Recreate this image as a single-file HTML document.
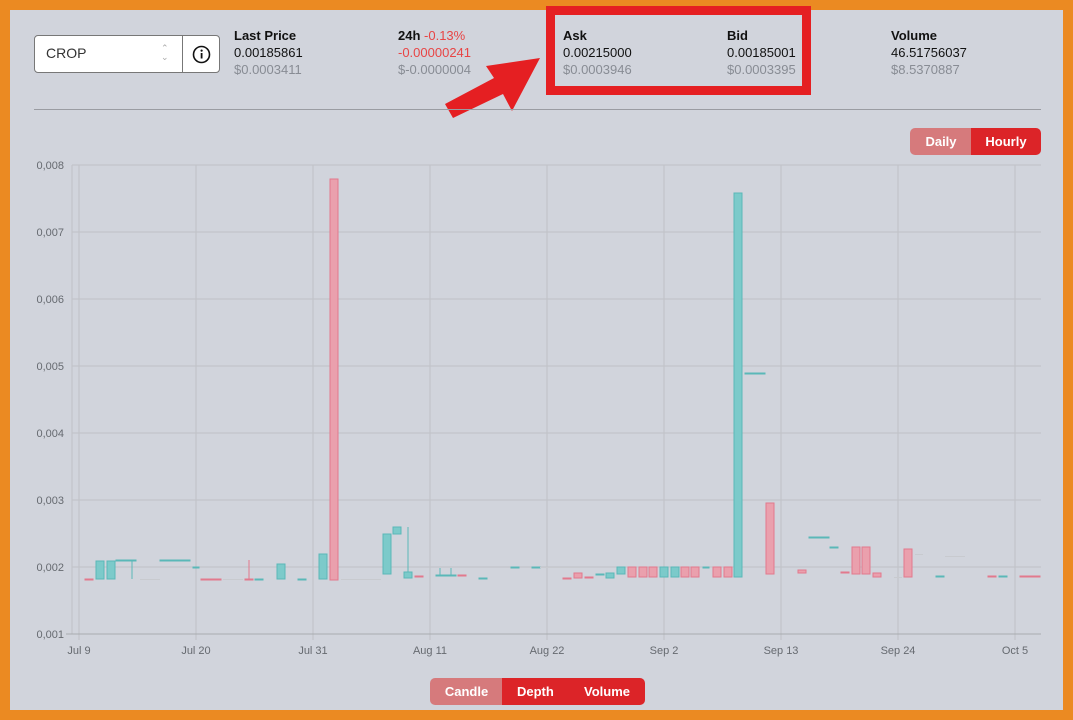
<!DOCTYPE html>
<html><head><meta charset="utf-8"><style>
*{margin:0;padding:0;box-sizing:border-box}
body{width:1073px;height:720px;background:#eb8a22;position:relative;overflow:hidden;font-family:"Liberation Sans",sans-serif}
#in{position:absolute;left:10px;top:10px;width:1053px;height:700px;background:#d1d4dc}
.t{position:absolute;font-size:13px;line-height:17px;color:#111}
.t b{font-weight:bold}
.g{color:#888c94}
.r{color:#e84545}
.sel{position:absolute;left:34px;top:35px;width:186px;height:38px;border:1px solid #777;border-radius:4px;background:#fff}
.btn{position:absolute;height:27px;font-size:13px;font-weight:bold;color:#fff;text-align:center;line-height:27px}
</style></head><body>
<div id="in"></div>
<div class="sel">
 <div style="position:absolute;left:11px;top:9px;font-size:14px;color:#333">CROP</div>
 <div style="position:absolute;left:126px;top:8px;font-size:9px;color:#aaa;line-height:9px">&#8963;<br>&#8964;</div>
 <div style="position:absolute;left:147px;top:0;width:1px;height:36px;background:#777"></div>
 <svg style="position:absolute;left:157px;top:9px" width="19" height="19"><circle cx="9.5" cy="9.5" r="8" fill="none" stroke="#111" stroke-width="1.6"/><rect x="8.7" y="8" width="1.8" height="5.5" fill="#111"/><circle cx="9.6" cy="5.6" r="1.1" fill="#111"/></svg>
</div>
<div class="t" style="left:234px;top:27px"><b>Last Price</b><br>0.00185861<br><span class="g">$0.0003411</span></div>
<div class="t" style="left:398px;top:27px"><b>24h</b> <span class="r">-0.13%</span><br><span class="r">-0.00000241</span><br><span class="g">$-0.0000004</span></div>
<div class="t" style="left:563px;top:27px"><b>Ask</b><br>0.00215000<br><span class="g">$0.0003946</span></div>
<div class="t" style="left:727px;top:27px"><b>Bid</b><br>0.00185001<br><span class="g">$0.0003395</span></div>
<div class="t" style="left:891px;top:27px"><b>Volume</b><br>46.51756037<br><span class="g">$8.5370887</span></div>
<div style="position:absolute;left:546px;top:6px;width:265px;height:89px;border:9px solid #e51f22"></div>
<svg style="position:absolute;left:0;top:0" width="1073" height="720">
<polygon points="445,104 494,78 486,66 540,58 512,111 503,94 453,118" fill="#e51f22"/>
</svg>
<div style="position:absolute;left:34px;top:109px;width:1007px;height:1px;background:#9a9ca2"></div>
<div class="btn" style="left:910px;top:128px;width:62px;background:#d67a7c;border-radius:5px 0 0 5px">Daily</div>
<div class="btn" style="left:971px;top:128px;width:70px;background:#dc2428;border-radius:0 5px 5px 0">Hourly</div>
<div class="btn" style="left:430px;top:678px;width:73px;background:#d67a7c;border-radius:5px 0 0 5px">Candle</div>
<div class="btn" style="left:502px;top:678px;width:143px;background:#dc2428;border-radius:0 5px 5px 0"><span style="position:absolute;left:15px">Depth</span><span style="position:absolute;left:82px">Volume</span></div>
<svg style="position:absolute;left:0;top:0" width="1073" height="720" font-family="Liberation Sans" font-size="11" fill="#666a70">
<g stroke="#bfc1c6" stroke-width="1">
<line x1="72" y1="165" x2="1041" y2="165"/><line x1="72" y1="232" x2="1041" y2="232"/><line x1="72" y1="299" x2="1041" y2="299"/><line x1="72" y1="366" x2="1041" y2="366"/><line x1="72" y1="433" x2="1041" y2="433"/><line x1="72" y1="500" x2="1041" y2="500"/><line x1="72" y1="567" x2="1041" y2="567"/>
<line x1="79" y1="165" x2="79" y2="640"/><line x1="196" y1="165" x2="196" y2="640"/><line x1="313" y1="165" x2="313" y2="640"/><line x1="430" y1="165" x2="430" y2="640"/><line x1="547" y1="165" x2="547" y2="640"/><line x1="664" y1="165" x2="664" y2="640"/><line x1="781" y1="165" x2="781" y2="640"/><line x1="898" y1="165" x2="898" y2="640"/><line x1="1015" y1="165" x2="1015" y2="640"/>
<line x1="72" y1="165" x2="72" y2="634"/>
</g>
<line x1="66" y1="634" x2="1041" y2="634" stroke="#a9abb0"/>
<g text-anchor="end"><text x="64" y="169">0,008</text><text x="64" y="236">0,007</text><text x="64" y="303">0,006</text><text x="64" y="370">0,005</text><text x="64" y="437">0,004</text><text x="64" y="504">0,003</text><text x="64" y="571">0,002</text><text x="64" y="638">0,001</text></g>
<g text-anchor="middle"><text x="79" y="654">Jul 9</text><text x="196" y="654">Jul 20</text><text x="313" y="654">Jul 31</text><text x="430" y="654">Aug 11</text><text x="547" y="654">Aug 22</text><text x="664" y="654">Sep 2</text><text x="781" y="654">Sep 13</text><text x="898" y="654">Sep 24</text><text x="1015" y="654">Oct 5</text></g>
<g fill="#7ccaca" stroke="#5ab8b8" stroke-width="1">
<rect x="96" y="561" width="8" height="18"/><rect x="107" y="561" width="8" height="18"/>
<line x1="132" y1="560" x2="132" y2="579"/>
<rect x="116" y="560" width="20" height="1"/><rect x="160" y="560" width="30" height="1"/><rect x="193" y="567" width="6" height="1"/>
<rect x="255" y="579" width="8" height="1"/><rect x="277" y="564" width="8" height="15"/><rect x="298" y="579" width="8" height="1"/>
<rect x="319" y="554" width="8" height="25"/>
<rect x="383" y="534" width="8" height="40"/><rect x="393" y="527" width="8" height="7"/>
<line x1="408" y1="527" x2="408" y2="572"/><rect x="404" y="572" width="8" height="6"/>
<line x1="440" y1="568" x2="440" y2="576"/><line x1="451" y1="568" x2="451" y2="576"/><rect x="436" y="575" width="20" height="1"/>
<rect x="479" y="578" width="8" height="1"/><rect x="511" y="567" width="8" height="1"/><rect x="532" y="567" width="8" height="1"/>
<rect x="596" y="574" width="8" height="1"/><rect x="606" y="573" width="8" height="5"/><rect x="617" y="567" width="8" height="7"/>
<rect x="660" y="567" width="8" height="10"/><rect x="671" y="567" width="8" height="10"/><rect x="703" y="567" width="6" height="1"/>
<rect x="734" y="193" width="8" height="384"/>
<rect x="745" y="373" width="20" height="1"/>
<rect x="809" y="537" width="20" height="1"/><rect x="830" y="547" width="8" height="1"/>
<rect x="936" y="576" width="8" height="1"/><rect x="999" y="576" width="8" height="1"/>
</g>
<g fill="#eaa0ad" stroke="#e2798d" stroke-width="1">
<rect x="85" y="579" width="8" height="1"/>
<rect x="201" y="579" width="20" height="1"/>
<line x1="249" y1="560" x2="249" y2="579"/><rect x="245" y="579" width="8" height="1"/>
<rect x="330" y="179" width="8" height="401"/>
<rect x="415" y="576" width="8" height="1"/><rect x="458" y="575" width="8" height="1"/>
<rect x="563" y="578" width="8" height="1"/><rect x="574" y="573" width="8" height="5"/><rect x="585" y="577" width="8" height="1"/>
<rect x="628" y="567" width="8" height="10"/><rect x="639" y="567" width="8" height="10"/><rect x="649" y="567" width="8" height="10"/>
<rect x="681" y="567" width="8" height="10"/><rect x="691" y="567" width="8" height="10"/><rect x="713" y="567" width="8" height="10"/><rect x="724" y="567" width="8" height="10"/>
<rect x="766" y="503" width="8" height="71"/><rect x="798" y="570" width="8" height="3"/>
<rect x="841" y="572" width="8" height="1"/><rect x="852" y="547" width="8" height="27"/><rect x="862" y="547" width="8" height="27"/>
<rect x="873" y="573" width="8" height="4"/><rect x="904" y="549" width="8" height="28"/>
<rect x="988" y="576" width="8" height="1"/><rect x="1020" y="576" width="20" height="1"/>
</g>
<g fill="#c8cacf"><rect x="140" y="579" width="20" height="1"/><rect x="223" y="579" width="20" height="1"/><rect x="341" y="579" width="40" height="1"/><rect x="894" y="577" width="8" height="1"/><rect x="915" y="554" width="8" height="1"/><rect x="945" y="556" width="20" height="1"/><rect x="540" y="567" width="40" height="1"/></g>
</svg>
</body></html>
